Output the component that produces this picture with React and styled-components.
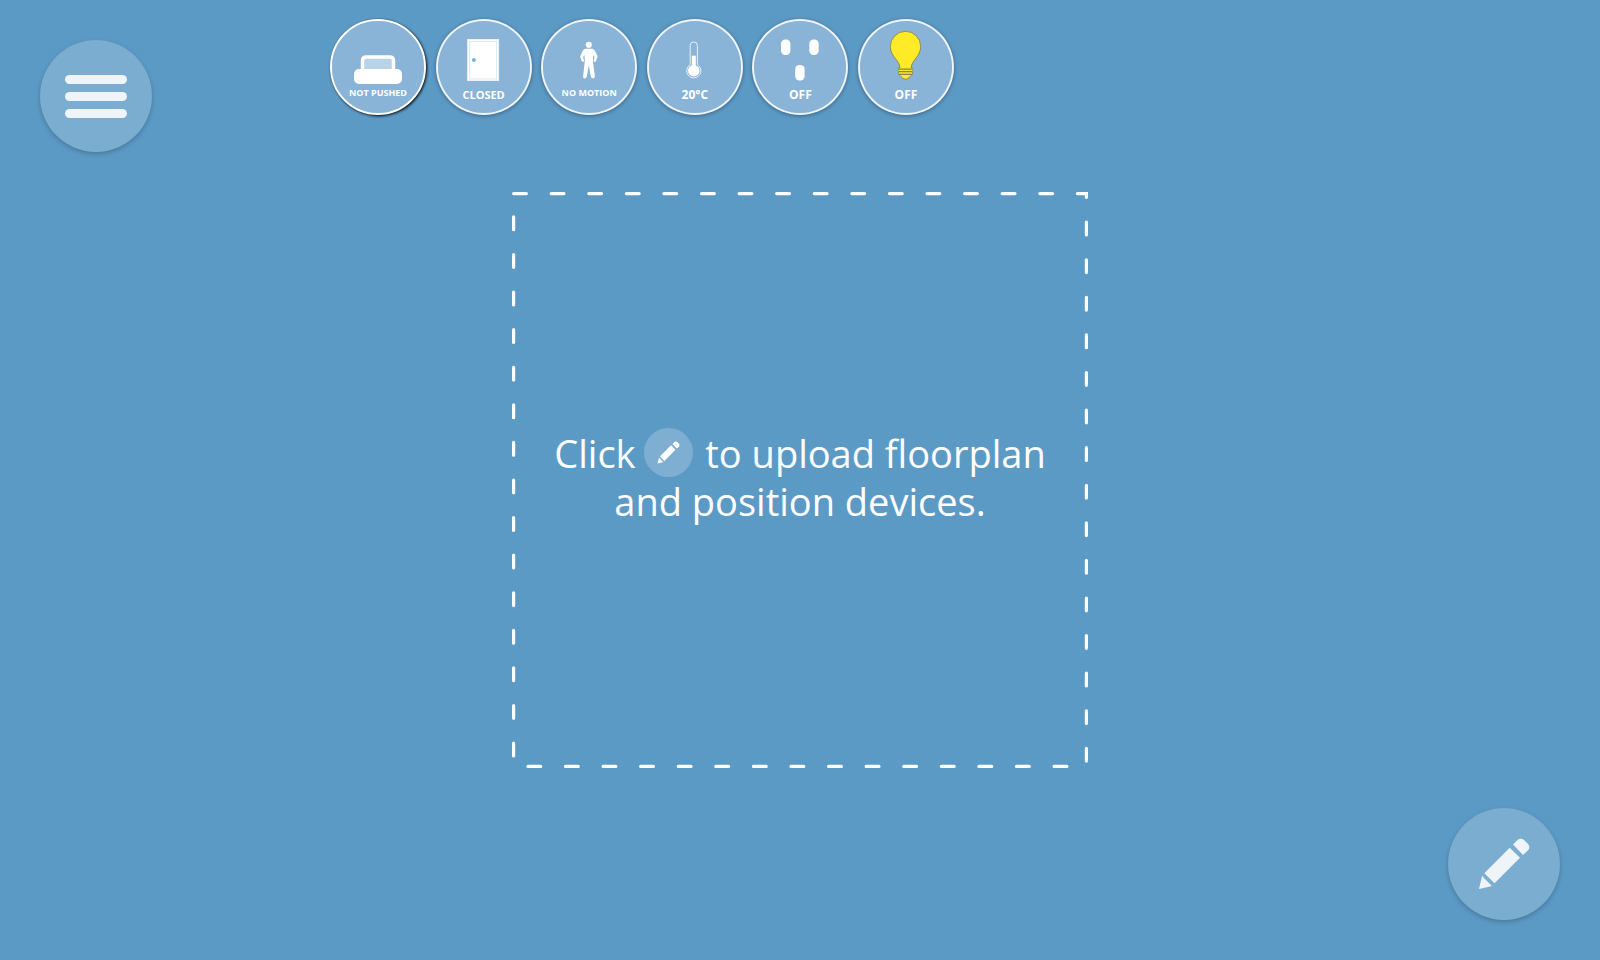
import React from "react";
import styled, { createGlobalStyle, css } from "styled-components";

const GlobalStyle = createGlobalStyle`
  *, *::before, *::after { box-sizing: border-box; }
  body {
    margin: 0;
    background: #5c9ac6;
    color: #fff;
    font-family: "Open Sans", "Liberation Sans", sans-serif;
  }
`;

const Page = styled.div`
  display: grid;
  grid-template-rows: 1fr auto 1fr;
  min-height: 100vh;
`;

const Header = styled.header`
  display: grid;
  grid-template-columns: 20% 1fr;
  align-items: start;
`;

const MenuArea = styled.nav`
  padding: 40px;
`;

const Footer = styled.footer`
  display: flex;
  justify-content: flex-end;
  align-items: flex-end;
  padding: 40px;
`;

const RoundButton = styled.button`
  display: flex;
  flex-direction: column;
  align-items: center;
  justify-content: center;
  gap: 8px;
  width: 112px;
  height: 112px;
  padding: 0;
  border: 0;
  border-radius: 50%;
  background: #7aadcf;
  color: #eff4f9;
  box-shadow: 0 2px 5px rgba(0, 0, 0, 0.22);
  cursor: pointer;
`;

const Bar = styled.span`
  width: 62px;
  height: 9px;
  border-radius: 5px;
  background: currentColor;
`;

const DeviceList = styled.div`
  display: flex;
  justify-content: space-between;
  width: 644px;
  padding: 19px 10px 0;
`;

const Device = styled.button`
  display: flex;
  flex-direction: column;
  align-items: center;
  width: 96px;
  height: 96px;
  padding: 0;
  border: 2px solid rgba(255, 255, 255, 0.9);
  border-radius: 50%;
  background: #89b4d7;
  background-clip: padding-box;
  color: #fff;
  font-family: inherit;
  box-shadow: 0 1px 4px rgba(0, 0, 0, 0.35);
  cursor: pointer;
  ${(p) =>
    p.$raised &&
    css`
      border-color: #fff;
      box-shadow: 1px 1px 3px #000;
    `}
`;

const DeviceIcon = styled.svg`
  display: block;
  flex: none;
  width: 92px;
  height: 66px;
`;

const labelSizes = {
  small: css`
    font-size: 9px;
    line-height: 12px;
  `,
  medium: css`
    font-size: 11px;
    line-height: 16px;
  `,
  large: css`
    font-size: 12px;
    line-height: 16px;
  `,
};

const DeviceLabel = styled.span`
  font-weight: 700;
  white-space: nowrap;
  ${(p) => labelSizes[p.$size]}
`;

const Stage = styled.main`
  display: grid;
  width: 36%;
  aspect-ratio: 1;
  margin: 0 auto;
`;

const DashedFrame = styled.svg`
  grid-area: 1 / 1;
  width: 100%;
  height: 100%;
`;

const Message = styled.p`
  grid-area: 1 / 1;
  place-self: center;
  margin: 0;
  padding: 0 16px 6px;
  font-size: 38px;
  line-height: 48px;
  font-weight: 400;
  text-align: center;
`;

const InlineBadge = styled.span`
  display: inline-block;
  width: 49px;
  height: 49px;
  margin: -4px 2px -4px -1px;
  border-radius: 50%;
  background: #7faed3;
  vertical-align: -5px;
`;

const PencilSvg = styled.svg`
  display: block;
  width: 100%;
  height: 100%;
`;

function Pencil() {
  return (
    <PencilSvg viewBox="0 0 112 112" fill="currentColor" aria-hidden="true">
      <path d="M31 81 34 68Q35 68 36 70L42 76Q44 77 43.300 78.300Z" />
      <path d="M36.300 65.300 61.700 39.700 72 49.700 46.500 75.200Z" />
      <path d="M65 36.500 69.300 32.200Q72.500 29.500 76 32L80 36Q82.500 39 80.300 42L75 47Z" />
    </PencilSvg>
  );
}

const icons = {
  button: (
    <>
      <path d="M30.500 52V39.500Q30.500 36 34.500 36H57.500Q61.500 36 61.500 39.500V52Z" fill="#b8d3e7" stroke="#fff" strokeWidth="3.500" />
      <rect x="22" y="48" width="48" height="15" rx="5" fill="#fff" />
    </>
  ),
  door: (
    <>
      <rect x="29.600" y="18.500" width="31" height="41" fill="#fff" stroke="#eceff6" />
      <rect x="31.600" y="20.500" width="27" height="37.500" fill="#fff" stroke="#dceaf5" />
      <circle cx="35.900" cy="39" r="2" fill="#7fb0d6" />
    </>
  ),
  motion: (
    <g fill="#fff">
      <circle cx="45.800" cy="23.800" r="3.100" />
      <path d="M42.800 27.800H48.800Q50.800 27.800 51.800 29.800L54.300 34.500Q54.600 35.500 54.300 36.500L52.800 40.500Q51.500 41.500 50.500 40L51.500 35.900 50.200 33.900 49.900 40 51.900 55.500Q51.700 57.400 50 57.400 48.300 57.400 47.800 55.500L45.800 44.500 43.800 55.500Q43.300 57.400 41.700 57.400 40 57.400 40.100 55.500L41.800 40 41.400 33.900 40.100 35.900 41.100 40Q40.100 41.500 38.900 40.500L37.400 36.500Q37.100 35.500 37.500 34.500L39.800 29.800Q40.800 27.800 42.800 27.800Z" />
    </g>
  ),
  temperature: (
    <>
      <path d="M41.200 43.700V24.500A3.600 3.600 0 0 1 48.400 24.500V43.700A7.100 7.100 0 1 1 41.200 43.700Z" fill="none" stroke="#fff" strokeWidth="0.800" />
      <circle cx="44.800" cy="49.700" r="5.800" fill="#fff" />
      <path d="M42.800 34.700H46.800V47H42.800Z" fill="#fff" />
    </>
  ),
  outlet: (
    <g fill="#fff">
      <rect x="27" y="18.600" width="9.400" height="15.400" rx="4.200" />
      <rect x="55.300" y="18.600" width="9.400" height="15.400" rx="4.200" />
      <rect x="41.200" y="44" width="9.400" height="15.400" rx="4.200" />
    </g>
  ),
  bulb: (
    <g fill="#ffea28" stroke="#85854f" strokeWidth="0.900" strokeLinejoin="round">
      <path d="M39.800 46.500C39.800 39.500 30.300 35.500 30.300 25.500A15.200 15.200 0 0 1 60.700 25.500C60.700 35.500 51.300 39.500 51.300 46.500Z" />
      <path d="M39 46.500H52.200Q53.500 47 52.200 48.200 53.500 49.500 52.200 50.700 53.500 52 52.200 53.300L50 55.600 48 57.500Q45.500 59 43 57.500L41 55.600 38.800 53.300Q37.500 52 38.800 50.700 37.500 49.500 38.800 48.200 37.500 47 39 46.500Z" stroke="#8b8a52" />
      <path d="M40.300 46.500H50.800" stroke="#ffea28" strokeWidth="1.500" />
      <path d="M38.800 48.200H52.200M38.800 50.700H52.200M38.800 53.300H52.200" strokeWidth="1.200" />
    </g>
  ),
};

const devices = [
  { icon: "button", label: "NOT PUSHED", size: "small", raised: true },
  { icon: "door", label: "CLOSED", size: "medium" },
  { icon: "motion", label: "NO MOTION", size: "small" },
  { icon: "temperature", label: "20°C", size: "large" },
  { icon: "outlet", label: "OFF", size: "large" },
  { icon: "bulb", label: "OFF", size: "large" },
];

export default function App() {
  return (
    <>
      <GlobalStyle />
      <Page>
        <Header>
          <MenuArea>
            <RoundButton type="button" aria-label="Menu">
              <Bar />
              <Bar />
              <Bar />
            </RoundButton>
          </MenuArea>
          <DeviceList>
            {devices.map((d) => (
              <Device key={d.icon} type="button" $raised={d.raised}>
                <DeviceIcon viewBox="0 0 92 66" aria-hidden="true">
                  {icons[d.icon]}
                </DeviceIcon>
                <DeviceLabel $size={d.size}>{d.label}</DeviceLabel>
              </Device>
            ))}
          </DeviceList>
        </Header>
        <Stage>
          <DashedFrame viewBox="0 0 180 180" fill="none" aria-hidden="true">
            <path
              d="M.5 .5H179.500V179.500H.5V.5"
              stroke="#fff"
              strokeLinecap="round"
              strokeDasharray="4 7.745"
            />
          </DashedFrame>
          <Message>
            Click{" "}
            <InlineBadge>
              <Pencil />
            </InlineBadge>{" "}
            to upload floorplan
            <br />
            and position devices.
          </Message>
        </Stage>
        <Footer>
          <RoundButton type="button" aria-label="Edit floorplan">
            <Pencil />
          </RoundButton>
        </Footer>
      </Page>
    </>
  );
}
